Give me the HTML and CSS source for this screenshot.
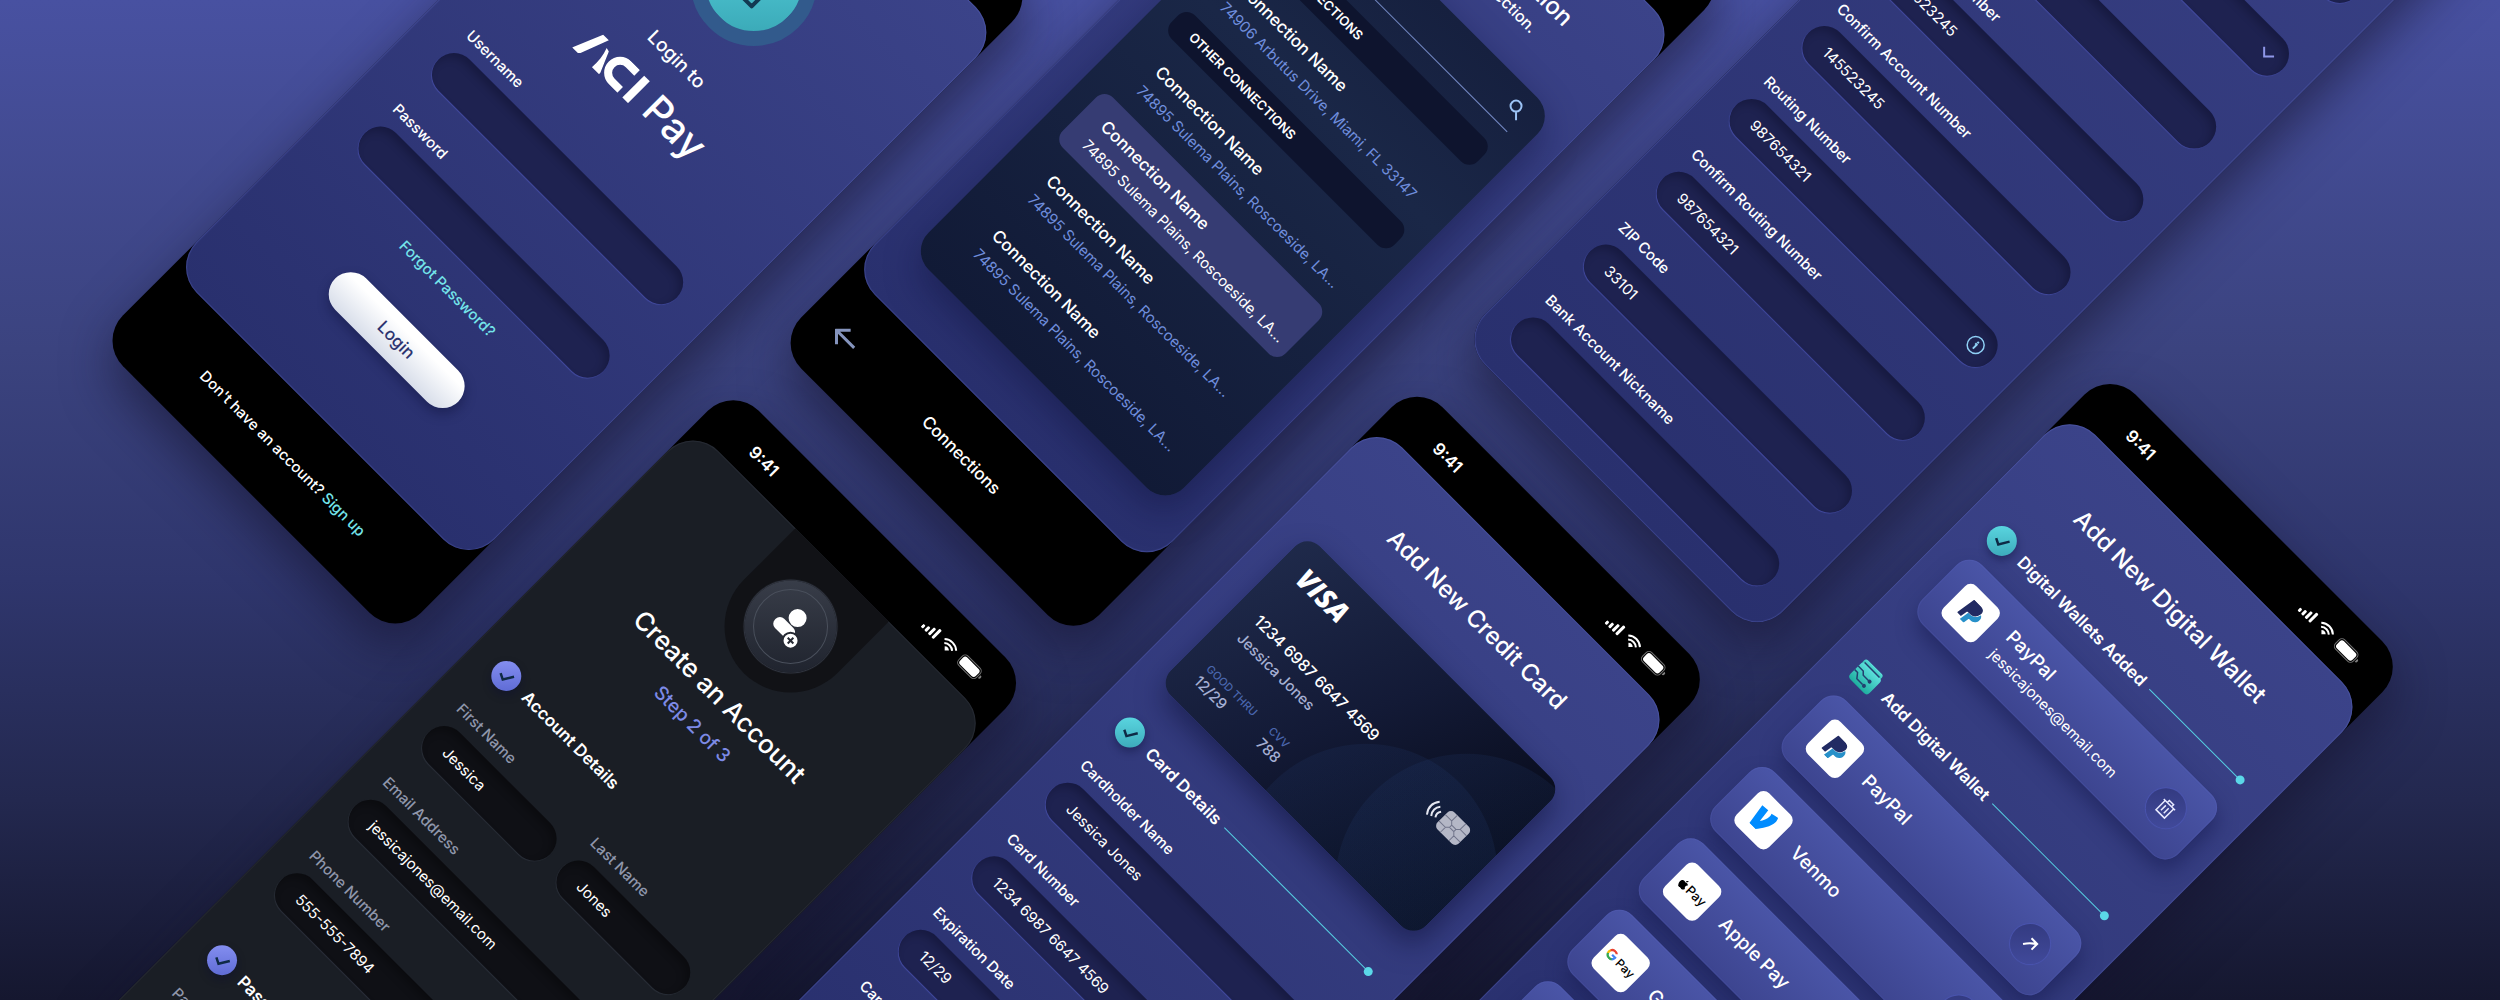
FILE: index.html
```html
<!DOCTYPE html>
<html lang="en">
<head>
    <meta charset="utf-8">
    <title>ACI Pay</title>
    <link rel="stylesheet" href="styles.css">
</head>
<body>
    <!-- shared icons -->
    <svg class="sprite" aria-hidden="true">
        <symbol id="i-status" viewBox="0 0 80 16">
            <g fill="#fff">
                <rect x="0" y="10" width="3" height="4" rx="1"/>
                <rect x="5" y="8" width="3" height="6" rx="1"/>
                <rect x="10" y="5" width="3" height="9" rx="1"/>
                <rect x="15" y="2" width="3" height="12" rx="1"/>
                <path d="M34 14l-3-3a4.500 4.500 0 0 1 6 0z"/>
                <rect x="52" y="3" width="22" height="10" rx="3"/>
                <path d="M77 6v4a2 2 0 0 0 0-4z" opacity=".5"/>
            </g>
            <g fill="none" stroke="#fff" stroke-width="2">
                <path d="M28.500 9a8 8 0 0 1 11 0M25.800 6a12 12 0 0 1 16.400 0"/>
                <rect x="50.500" y="1.500" width="25" height="13" rx="4" stroke-width="1" opacity=".45"/>
            </g>
        </symbol>
        <symbol id="i-check" viewBox="0 0 30 30">
            <path d="M9 17l6 3 6-10" fill="none" stroke="#0e2a45" stroke-width="2.500"/>
        </symbol>
        <symbol id="i-paypal" viewBox="0 0 24 24">
            <path d="M20.900 6.300c-1 5-4.300 7.200-8.600 7.200H10L8.300 24h4.400c.5 0 .9-.3 1-.8l.8-5c.1-.5.500-.8 1-.8h1c3.500 0 6.100-1.600 6.800-5.600.4-2.300-.3-4.300-2.400-5.500z" fill="#2790c9"/>
            <path d="M7 21H2.500a.6.6 0 0 1-.6-.7L4.900.9C5 .4 5.500 0 6 0h7.500c2.500 0 4.500.5 5.600 1.800 1 1.200 1.300 2.400 1 4.300-.9 5.400-4.300 7.200-8.700 7.200H9.200c-.5 0-1 .4-1 .9z" fill="#222b63"/>
        </symbol>
        <symbol id="i-venmo" viewBox="0 0 24 24">
            <path d="M20.600 0c.9 1.400 1.400 3 1.400 5 0 6.100-5.300 14.100-9.500 19H4L.6 2.300 8.200 1.500l1.800 13.700c1.700-2.700 3.700-7 3.700-9.900 0-1.700-.3-2.700-.7-3.600z" fill="#008cff"/>
        </symbol>
        <symbol id="i-apple" viewBox="0 0 24 24">
            <path d="M12.200 6.900c-1 0-2.400-1.100-4-1-2 0-3.900 1.200-5 3-2.100 3.700-.5 9.100 1.500 12.100 1 1.500 2.200 3.100 3.800 3 1.500 0 2.100-1 3.900-1s2.400 1 4 1c1.600 0 2.700-1.500 3.700-2.900 1.200-1.700 1.600-3.300 1.700-3.400 0 0-3.200-1.200-3.200-4.900 0-3 2.500-4.500 2.600-4.600-1.400-2.100-3.600-2.300-4.400-2.400-2-.2-3.700 1.100-4.600 1.100zM15.500 3.800c.8-1 1.400-2.400 1.200-3.800-1.200.1-2.700.8-3.500 1.800-.8.900-1.500 2.300-1.300 3.700 1.300.1 2.700-.7 3.600-1.700" fill="#000"/>
        </symbol>
        <symbol id="i-google" viewBox="0 0 24 24">
            <path d="M23 12.300c0-.8-.1-1.600-.2-2.300H12v4.400h6.200a5.300 5.300 0 0 1-2.300 3.500v2.900h3.700c2.200-2 3.400-5 3.400-8.500z" fill="#4285f4"/>
            <path d="M12 23.500c3.100 0 5.700-1 7.600-2.800l-3.700-2.900c-1 .7-2.300 1.100-3.900 1.100-3 0-5.500-2-6.400-4.800H1.800v3A11.500 11.500 0 0 0 12 23.500z" fill="#34a853"/>
            <path d="M5.600 14.200a7 7 0 0 1 0-4.400v-3H1.800a11.500 11.500 0 0 0 0 10.300z" fill="#fbbc05"/>
            <path d="M12 5.100c1.700 0 3.200.6 4.400 1.700l3.300-3.300A11.500 11.500 0 0 0 1.800 6.800l3.800 3C6.500 7 9 5.100 12 5.100z" fill="#ea4335"/>
        </symbol>
        <symbol id="i-arrow" viewBox="0 0 20 20">
            <path d="M5 15Q9 9 14 6M7 5h8v8" fill="none" stroke="#fff" stroke-width="2"/>
        </symbol>
        <symbol id="i-trash" viewBox="0 0 20 20">
            <path d="M2 5h16M7 5V2h6v3M4 5v13h12V5M8 8v7M12 8v7" fill="none" stroke="#e8eaff" stroke-width="1.500"/>
        </symbol>
        <symbol id="i-info" viewBox="0 0 20 20">
            <circle cx="10" cy="10" r="8.500" fill="none" stroke="#8fd0f5" stroke-width="1.500"/>
            <path d="M8.500 9H10.500V14.500M10 5.500v2" fill="none" stroke="#8fd0f5" stroke-width="2"/>
        </symbol>
        <symbol id="i-chevron" viewBox="0 0 20 20">
            <path d="M3 7l7 7 7-7" fill="none" stroke="#8f97e8" stroke-width="2"/>
        </symbol>
    </svg>

    <main class="stage">
        <div class="wall">

            <div class="column column-1">
                <section class="phone">
                    <header class="status"></header>
                    <div class="screen">
                        <div class="lock">
                            <svg width="96" height="96" viewBox="0 0 96 96">
                                <path d="M36 44v-8a12 12 0 0 1 24 0v8M33 44h30v22H33z" fill="none" stroke="#123a52" stroke-width="4" stroke-linejoin="round"/>
                            </svg>
                        </div>
                        <p class="login-to">Login to</p>
                        <div class="logo">
                            <svg width="80" height="32" viewBox="0 0 80 32">
                                <path d="M0 32L13 1h8L10 30l-2 2zM25 8l4 1 9 21v2H28c1-8 0-16-3-24z" fill="#fff"/>
                                <path d="M64 4H52a12 12 0 0 0 0 24h12" fill="none" stroke="#fff" stroke-width="8"/>
                                <path d="M71 1h8v31h-8z" fill="#fff"/>
                            </svg>
                            <span>Pay</span>
                        </div>
                        <form class="fields login-form">
                            <div class="field">
                                <label for="username">Username</label>
                                <div class="box"><input type="text" id="username"></div>
                            </div>
                            <div class="field">
                                <label for="password">Password</label>
                                <div class="box"><input type="password" id="password"></div>
                            </div>
                        </form>
                        <a class="forgot" href="#">Forgot Password?</a>
                        <button type="button" class="login">Login</button>
                    </div>
                    <footer class="footer">
                        <p>Don't have an account? <a href="#">Sign up</a></p>
                    </footer>
                </section>
            </div>

            <div class="column column-2">
                <section class="phone connections">
                    <header class="status"></header>
                    <div class="screen">
                        <h2>Choose a Connection</h2>
                        <p class="hint">Please select a connection.</p>
                        <div class="panel">
                            <div class="search">
                                <input type="text" aria-label="Search connections">
                                <svg width="20" height="20" viewBox="0 0 20 20">
                                    <path d="M12 12l6 6M13.500 8a5.500 5.500 0 1 1-11 0 5.500 5.500 0 0 1 11 0z" fill="none" stroke="#9cc3f5" stroke-width="2"/>
                                </svg>
                            </div>
                            <h3>MY CONNECTIONS</h3>
                            <a class="item" href="#"><b>Connection Name</b><span>74906 Arbutus Drive, Miami, FL 33147</span></a>
                            <h3>OTHER CONNECTIONS</h3>
                            <a class="item" href="#"><b>Connection Name</b><span>74895 Sulema Plains, Roscoeside, LA...</span></a>
                            <a class="item selected" href="#"><b>Connection Name</b><span>74895 Sulema Plains, Roscoeside, LA...</span></a>
                            <a class="item" href="#"><b>Connection Name</b><span>74895 Sulema Plains, Roscoeside, LA...</span></a>
                            <a class="item" href="#"><b>Connection Name</b><span>74895 Sulema Plains, Roscoeside, LA...</span></a>
                        </div>
                    </div>
                    <footer class="footer back-footer">
                        <button type="button" class="back" aria-label="Back">
                            <svg width="28" height="24" viewBox="0 0 28 24">
                                <path d="M27 12H2M12 2L2 12l10 10" fill="none" stroke="#8594bd" stroke-width="3"/>
                            </svg>
                        </button>
                        <p>Connections</p>
                    </footer>
                </section>

                <section class="phone dark">
                    <header class="status"><span>9:41</span><svg width="80" height="16"><use href="#i-status"/></svg></header>
                    <div class="screen">
                        <div class="avatar-tab">
                            <div class="avatar">
                                <svg width="76" height="76" viewBox="0 0 76 76">
                                    <circle cx="38" cy="38" r="37" fill="none" stroke="#4a505c" stroke-width="1"/>
                                    <circle cx="37" cy="27" r="9" fill="#fff"/>
                                    <rect x="22" y="37" width="25" height="13" rx="6" fill="#fff"/>
                                    <circle cx="48" cy="48" r="8" fill="#fff" stroke="#262a33" stroke-width="2"/>
                                    <path d="M48 44v8M44 48h8" stroke="#262a33" stroke-width="2"/>
                                </svg>
                            </div>
                        </div>
                        <h2>Create an Account</h2>
                        <p class="step">Step 2 of 3</p>
                        <div class="section-head">
                            <svg class="tick" width="30" height="30"><use href="#i-check"/></svg>
                            <h4>Account Details</h4>
                        </div>
                        <form class="fields">
                            <div class="row">
                                <div class="field">
                                    <label for="first">First Name</label>
                                    <div class="box"><input type="text" id="first" value="Jessica"></div>
                                </div>
                                <div class="field">
                                    <label for="last">Last Name</label>
                                    <div class="box"><input type="text" id="last" value="Jones"></div>
                                </div>
                            </div>
                            <div class="field">
                                <label for="email">Email Address</label>
                                <div class="box"><input type="text" id="email" value="jessicajones@email.com"></div>
                            </div>
                            <div class="field">
                                <label for="phone">Phone Number</label>
                                <div class="box"><input type="text" id="phone" value="555-555-7894"></div>
                            </div>
                        </form>
                        <div class="section-head second">
                            <svg class="tick" width="30" height="30"><use href="#i-check"/></svg>
                            <h4>Password</h4>
                        </div>
                        <form class="fields">
                            <div class="field">
                                <label for="new-password">Password</label>
                                <div class="box"><input type="password" id="new-password"></div>
                            </div>
                        </form>
                    </div>
                </section>
            </div>

            <div class="column column-3">
                <section class="phone bank">
                    <div class="screen">
                        <form class="fields">
                            <div class="field">
                                <label for="holder">Account Holder</label>
                                <div class="box"><input type="text" id="holder"></div>
                            </div>
                            <div class="field">
                                <label for="type">Account Type</label>
                                <div class="box">
                                    <select id="type"><option></option></select>
                                    <svg width="20" height="20"><use href="#i-chevron"/></svg>
                                </div>
                            </div>
                            <div class="field">
                                <label for="bank">Bank Name</label>
                                <div class="box"><input type="text" id="bank"></div>
                            </div>
                            <div class="field">
                                <label for="account">Account Number</label>
                                <div class="box"><input type="text" id="account" value="145523245"></div>
                            </div>
                            <div class="field">
                                <label for="account2">Confirm Account Number</label>
                                <div class="box"><input type="text" id="account2" value="145523245"></div>
                            </div>
                            <div class="field">
                                <label for="routing">Routing Number</label>
                                <div class="box">
                                    <input type="text" id="routing" value="987654321">
                                    <svg width="20" height="20"><use href="#i-info"/></svg>
                                </div>
                            </div>
                            <div class="field">
                                <label for="routing2">Confirm Routing Number</label>
                                <div class="box"><input type="text" id="routing2" value="987654321"></div>
                            </div>
                            <div class="field">
                                <label for="zip">ZIP Code</label>
                                <div class="box"><input type="text" id="zip" value="33101"></div>
                            </div>
                            <div class="field">
                                <label for="nickname">Bank Account Nickname</label>
                                <div class="box"><input type="text" id="nickname"></div>
                            </div>
                        </form>
                    </div>
                </section>

                <section class="phone">
                    <header class="status"><span>9:41</span><svg width="80" height="16"><use href="#i-status"/></svg></header>
                    <div class="screen">
                        <h2>Add New Credit Card</h2>
                        <div class="credit-card">
                            <div class="visa">VISA</div>
                            <div class="number">1234 6987 6647 4569</div>
                            <div class="holder">Jessica Jones</div>
                            <dl>
                                <div><dt>GOOD THRU</dt><dd>12/29</dd></div>
                                <div><dt>CVV</dt><dd>788</dd></div>
                            </dl>
                            <svg class="chip" width="50" height="26" viewBox="0 0 50 26">
                                <g fill="none" stroke="#e4e6f0" stroke-width="2">
                                    <path d="M14 10q-3 4 0 8M10 7q-5 6 0 13M6 4q-7 9 0 18"/>
                                </g>
                                <rect x="19" y="1" width="30" height="24" rx="5" fill="#b4b7c6"/>
                                <path d="M19 9h9l3 3v3l-3 3h-9M49 9h-9l-3 3v3l3 3h9M31 12h6M31 15h6M28 9V1M40 9V1M28 18v7M40 18v7" fill="none" stroke="#70748a" stroke-width="1"/>
                            </svg>
                        </div>
                        <div class="section-head">
                            <svg class="tick" width="30" height="30"><use href="#i-check"/></svg>
                            <h4>Card Details</h4>
                            <i class="line"></i>
                        </div>
                        <form class="fields">
                            <div class="field">
                                <label for="cardholder">Cardholder Name</label>
                                <div class="box"><input type="text" id="cardholder" value="Jessica Jones"></div>
                            </div>
                            <div class="field">
                                <label for="card">Card Number</label>
                                <div class="box"><input type="text" id="card" value="1234 6987 6647 4569"></div>
                            </div>
                            <div class="field">
                                <label for="expires">Expiration Date</label>
                                <div class="box"><input type="text" id="expires" value="12/29"></div>
                            </div>
                            <div class="field">
                                <label for="card-name">Card Nickname</label>
                                <div class="box"><input type="text" id="card-name"></div>
                            </div>
                        </form>
                    </div>
                </section>
            </div>

            <div class="column column-4">
                <section class="phone">
                    <header class="status"><span>9:41</span><svg width="80" height="16"><use href="#i-status"/></svg></header>
                    <div class="screen">
                        <h2>Add New Digital Wallet</h2>
                        <div class="section-head">
                            <svg class="tick" width="30" height="30"><use href="#i-check"/></svg>
                            <h4>Digital Wallets Added</h4>
                            <i class="line"></i>
                        </div>
                        <ul class="wallets">
                            <li>
                                <div class="tile"><svg width="24" height="24"><use href="#i-paypal"/></svg></div>
                                <div class="name">PayPal<small>jessicajones@email.com</small></div>
                                <button type="button" aria-label="Remove"><svg width="20" height="20"><use href="#i-trash"/></svg></button>
                            </li>
                        </ul>
                        <div class="section-head second">
                            <svg width="30" height="30" viewBox="0 0 30 30">
                                <defs>
                                    <linearGradient id="teal" x1="0" y1="0" x2="0" y2="1">
                                        <stop offset="0" stop-color="#5de0dc"/>
                                        <stop offset="1" stop-color="#1fae9f"/>
                                    </linearGradient>
                                </defs>
                                <rect x="2" y="2" width="25" height="7" rx="3" fill="url(#teal)"/>
                                <rect x="2" y="6" width="27" height="22" rx="4" fill="url(#teal)"/>
                                <path d="M4 6h21M2 13h7l3 3h8M2 18h4l4 5h8" fill="none" stroke="#23406f" stroke-width="1.500"/>
                                <circle cx="21" cy="16" r="2" fill="#23406f"/>
                                <circle cx="20" cy="23" r="2" fill="#23406f"/>
                            </svg>
                            <h4>Add Digital Wallet</h4>
                            <i class="line"></i>
                        </div>
                        <ul class="wallets">
                            <li>
                                <div class="tile"><svg width="24" height="24"><use href="#i-paypal"/></svg></div>
                                <div class="name">PayPal</div>
                                <button type="button" aria-label="Add PayPal"><svg width="20" height="20"><use href="#i-arrow"/></svg></button>
                            </li>
                            <li>
                                <div class="tile"><svg width="24" height="24"><use href="#i-venmo"/></svg></div>
                                <div class="name">Venmo</div>
                                <button type="button" aria-label="Add Venmo"><svg width="20" height="20"><use href="#i-arrow"/></svg></button>
                            </li>
                            <li>
                                <div class="tile"><svg width="11" height="11"><use href="#i-apple"/></svg>Pay</div>
                                <div class="name">Apple Pay</div>
                                <button type="button" aria-label="Add Apple Pay"><svg width="20" height="20"><use href="#i-arrow"/></svg></button>
                            </li>
                            <li>
                                <div class="tile google"><svg width="12" height="12"><use href="#i-google"/></svg>Pay</div>
                                <div class="name">Google Pay</div>
                                <button type="button" aria-label="Add Google Pay"><svg width="20" height="20"><use href="#i-arrow"/></svg></button>
                            </li>
                            <li>
                                <div class="tile"></div>
                                <div class="name">Samsung Pay</div>
                            </li>
                        </ul>
                    </div>
                </section>
            </div>

        </div>
    </main>
</body>
</html>
```
FILE: styles.css
```css
* {
    box-sizing: border-box;
}

body {
    margin: 0;
    font-family: Inter, "Liberation Sans", sans-serif;
    font-size: 15px;
    font-weight: 500;
    color: #fff;
}

h2, h3, h4, p, ul, dl, dd {
    margin: 0;
    padding: 0;
}

input, select, button {
    font: inherit;
    color: inherit;
    border: none;
    background: none;
    padding: 0;
}

a {
    color: #74e4ea;
    text-decoration: none;
}

svg {
    display: block;
    flex: none;
}

.sprite {
    position: absolute;
    width: 0;
    height: 0;
}

.stage {
    position: relative;
    height: 100vh;
    overflow: hidden;
    background: linear-gradient(#4851a1 0%, #3b437f 35%, #2f366d 58%, #23284f 80%, #15172f 100%);
}

/* the four columns turn as one sheet around the top left corner of the page */
.wall {
    position: absolute;
    top: -2000px;
    left: 0;
    padding-left: 310px;
    display: grid;
    grid-template-columns: repeat(4, 421px);
    gap: 60px;
    align-items: start;
    transform: rotate(45deg);
    transform-origin: 0 2000px;
}

.column {
    display: grid;
    grid-template-columns: minmax(0, 1fr);
    gap: 60px;
}

.column-1 { margin-top: 1264px; }
.column-2 { margin-top: 766px; }
.column-4 { margin-top: 769px; }

/* phone */
.phone {
    display: flex;
    flex-direction: column;
    min-height: 914px;
    border-radius: 36px;
    background: #000;
    box-shadow: 16px 16px 50px rgba(20, 18, 45, 0.6);
}

.status {
    height: 57px;
    padding: 6px 38px 0 58px;
    display: flex;
    align-items: center;
    justify-content: space-between;
    font-size: 17px;
    font-weight: 600;
}

.screen {
    flex: 1;
    display: flex;
    flex-direction: column;
    padding: 0 30px 30px;
    border-radius: 36px;
    background: linear-gradient(#3b4389, #29306e);
    box-shadow: inset 0 0 1px 1px rgba(100, 112, 205, 0.35);
}

.footer {
    height: 104px;
    display: flex;
    align-items: center;
    justify-content: center;
}

.phone h2 {
    margin-top: 52px;
    font-size: 24px;
    font-weight: 500;
    line-height: 34px;
    text-align: center;
}

/* form fields */
.fields {
    display: grid;
    grid-template-columns: minmax(0, 1fr);
    gap: 32px;
}

.row {
    display: grid;
    grid-template-columns: repeat(2, minmax(0, 1fr));
    gap: 18px;
}

.field label {
    display: block;
    height: 28px;
    padding-left: 3px;
    line-height: 20px;
}

.box {
    display: flex;
    align-items: center;
    height: 44px;
    padding: 0 12px 0 24px;
    border-radius: 22px;
    background: #1e2250;
    box-shadow: inset 0 6px 8px rgba(0, 0, 20, 0.25), 0 1px 1px #444ca3;
}

.box input,
.box select {
    flex: 1;
    min-width: 0;
    height: 100%;
    appearance: none;
    outline: none;
    font-weight: 400;
}

.section-head {
    display: flex;
    align-items: center;
    height: 30px;
    margin: 40px 0 30px;
}

.section-head.second {
    margin-top: 62px;
}

.section-head h4 {
    margin-left: 11px;
    font-size: 17px;
    font-weight: 600;
}

.tick {
    border-radius: 50%;
    background: linear-gradient(135deg, #5fdde6, #37a3b4);
    box-shadow: 3px 3px 8px rgba(10, 12, 50, 0.4);
}

.line {
    position: relative;
    flex: 1;
    height: 1px;
    margin: 0 8px;
    background: #56cfe2;
}

.line::after {
    content: "";
    position: absolute;
    right: -4px;
    top: -4px;
    width: 9px;
    height: 9px;
    border-radius: 50%;
    background: #5bd8e8;
}

/* login */
.column-1 .phone {
    min-height: 908px;
}

.column-1 .status {
    height: 51px;
}

.lock {
    align-self: center;
    margin-top: 77px;
    border: 15px solid #325a8c;
    border-radius: 50%;
    background: linear-gradient(135deg, #5cd9e6, #36a3b1);
}

.login-to {
    margin-top: 33px;
    font-size: 19px;
    line-height: 26px;
    text-align: center;
}

.logo {
    display: flex;
    justify-content: center;
    gap: 14px;
    height: 32px;
    margin: 20px 0 53px;
    font-size: 40px;
    line-height: 32px;
}

.login-form {
    padding: 0 12px;
}

.forgot {
    margin-top: 20px;
    line-height: 20px;
    text-align: center;
}

.login {
    align-self: center;
    width: 174px;
    height: 44px;
    margin-top: 40px;
    border-radius: 22px;
    background: linear-gradient(#fff 20%, #d8deea);
    box-shadow: 4px 4px 12px rgba(10, 12, 50, 0.4);
    color: #2d3470;
    font-size: 17px;
}

/* connections */
.connections {
    min-height: 928px;
}

.connections .status {
    height: 71px;
}

.hint {
    margin-top: 1px;
    font-size: 16px;
    line-height: 24px;
    text-align: center;
}

.panel {
    height: 552px;
    margin-top: 34px;
    padding: 0 23px;
    border-radius: 26px;
    background: linear-gradient(#16203f, #1a2747 30%, #111a36);
    box-shadow: 10px 12px 36px rgba(10, 12, 50, 0.4);
}

.search {
    display: flex;
    align-items: center;
    height: 46px;
    margin-bottom: 20px;
    border-bottom: 1px solid #7489c4;
}

.search input {
    flex: 1;
    min-width: 0;
}

.panel h3 {
    height: 33px;
    margin: 8px 0 6px;
    padding-left: 23px;
    border-radius: 12px;
    background: #0e142e;
    font-size: 13px;
    font-weight: 600;
    line-height: 33px;
}

.item {
    display: block;
    height: 71px;
    padding: 12px 0 0 24px;
    border-radius: 12px;
    color: #fff;
    white-space: nowrap;
}

.item + .item {
    margin-top: 6px;
}

.item b {
    display: block;
    font-size: 17px;
    font-weight: 500;
    line-height: 26px;
}

.item span {
    display: block;
    color: #6f8ddc;
    font-weight: 400;
    line-height: 28px;
}

.item.selected {
    background: #363c73;
}

.item.selected span {
    color: #fff;
}

.back-footer {
    display: grid;
    grid-template-columns: 1fr auto 1fr;
    padding-left: 32px;
    font-size: 17px;
}

.back-footer p {
    margin-left: -32px;
}

/* create an account */
.dark .screen {
    background: #1a1e25;
    box-shadow: inset 0 0 1px 1px rgba(60, 66, 78, 0.4);
}

.avatar-tab {
    align-self: center;
    display: flex;
    align-items: flex-end;
    justify-content: center;
    width: 132px;
    height: 139px;
    padding-bottom: 20px;
    border-radius: 0 0 66px 66px;
    background: #111216;
}

.avatar {
    padding: 8px;
    border-radius: 50%;
    background: linear-gradient(135deg, #3d424e, #1b1f29);
    box-shadow: 0 0 1px 1px #343945;
}

.dark h2 {
    margin-top: 17px;
    font-size: 26px;
}

.step {
    margin-top: 9px;
    color: #7d8ae6;
    font-size: 19px;
    line-height: 26px;
    text-align: center;
}

.step + .section-head {
    margin-top: 69px;
}

.dark label {
    color: #8f96ab;
}

.dark .box {
    background: #0f1015;
    box-shadow: inset 0 6px 8px rgba(0, 0, 0, 0.3), 0 1px 1px #2b303a;
}

.dark .tick {
    background: linear-gradient(135deg, #8b95f5, #5865d0);
}

/* bank */
.bank {
    height: 1208px;
}

.bank .screen {
    justify-content: flex-end;
}

.bank .fields {
    gap: 31px;
}

/* credit card */
.credit-card {
    position: relative;
    height: 211px;
    margin-top: 42px;
    padding: 18px 24px;
    border-radius: 18px;
    background:
        radial-gradient(circle at 283px 200px, rgba(40, 70, 130, 0.15) 131px, transparent 132px),
        radial-gradient(circle at 361px 136px, rgba(40, 70, 130, 0.15) 131px, transparent 132px),
        linear-gradient(115deg, #1f2a4b, #131a36 45%, #03050f);
    box-shadow: 8px 10px 28px rgba(10, 12, 50, 0.5);
}

.visa {
    font-family: "Open Sans", sans-serif;
    font-size: 28px;
    font-style: italic;
    font-weight: 800;
    line-height: 28px;
}

.number {
    margin-top: 36px;
    font-size: 16px;
    line-height: 26px;
}

.holder {
    color: #a5afd3;
    line-height: 24px;
}

.credit-card dl {
    display: grid;
    grid-template-columns: 88px 1fr;
    margin-top: 24px;
}

.credit-card dt {
    color: #4a66ad;
    font-size: 11px;
    line-height: 16px;
}

.credit-card dd {
    color: #a5afd3;
    line-height: 18px;
}

.chip {
    position: absolute;
    right: 34px;
    top: 92px;
}

/* digital wallets */
.wallets {
    display: grid;
    gap: 17px;
    margin-top: -14px;
    list-style: none;
}

.wallets li {
    display: flex;
    align-items: center;
    height: 84px;
    padding: 0 21px;
    border-radius: 18px;
    background: linear-gradient(#4a55a7, #3d4590);
    box-shadow: 8px 8px 20px rgba(25, 30, 85, 0.6), inset 0 0 1px 1px rgba(100, 112, 205, 0.2);
}

.tile {
    display: flex;
    align-items: center;
    justify-content: center;
    gap: 1px;
    width: 46px;
    height: 46px;
    margin-right: 19px;
    border-radius: 8px;
    background: #fff;
    color: #000;
    font-size: 13px;
}

.tile.google {
    gap: 2px;
    font-size: 12px;
}

.name {
    flex: 1;
    font-size: 19px;
    line-height: 26px;
}

.name small {
    display: block;
    font-size: 15px;
    font-weight: 400;
    line-height: 24px;
}

.wallets button {
    display: flex;
    align-items: center;
    justify-content: center;
    width: 40px;
    height: 40px;
    border-radius: 50%;
    background: linear-gradient(135deg, #31387c, #434c9f);
    box-shadow: 0 0 1px 1px #4a54b0;
}
```
